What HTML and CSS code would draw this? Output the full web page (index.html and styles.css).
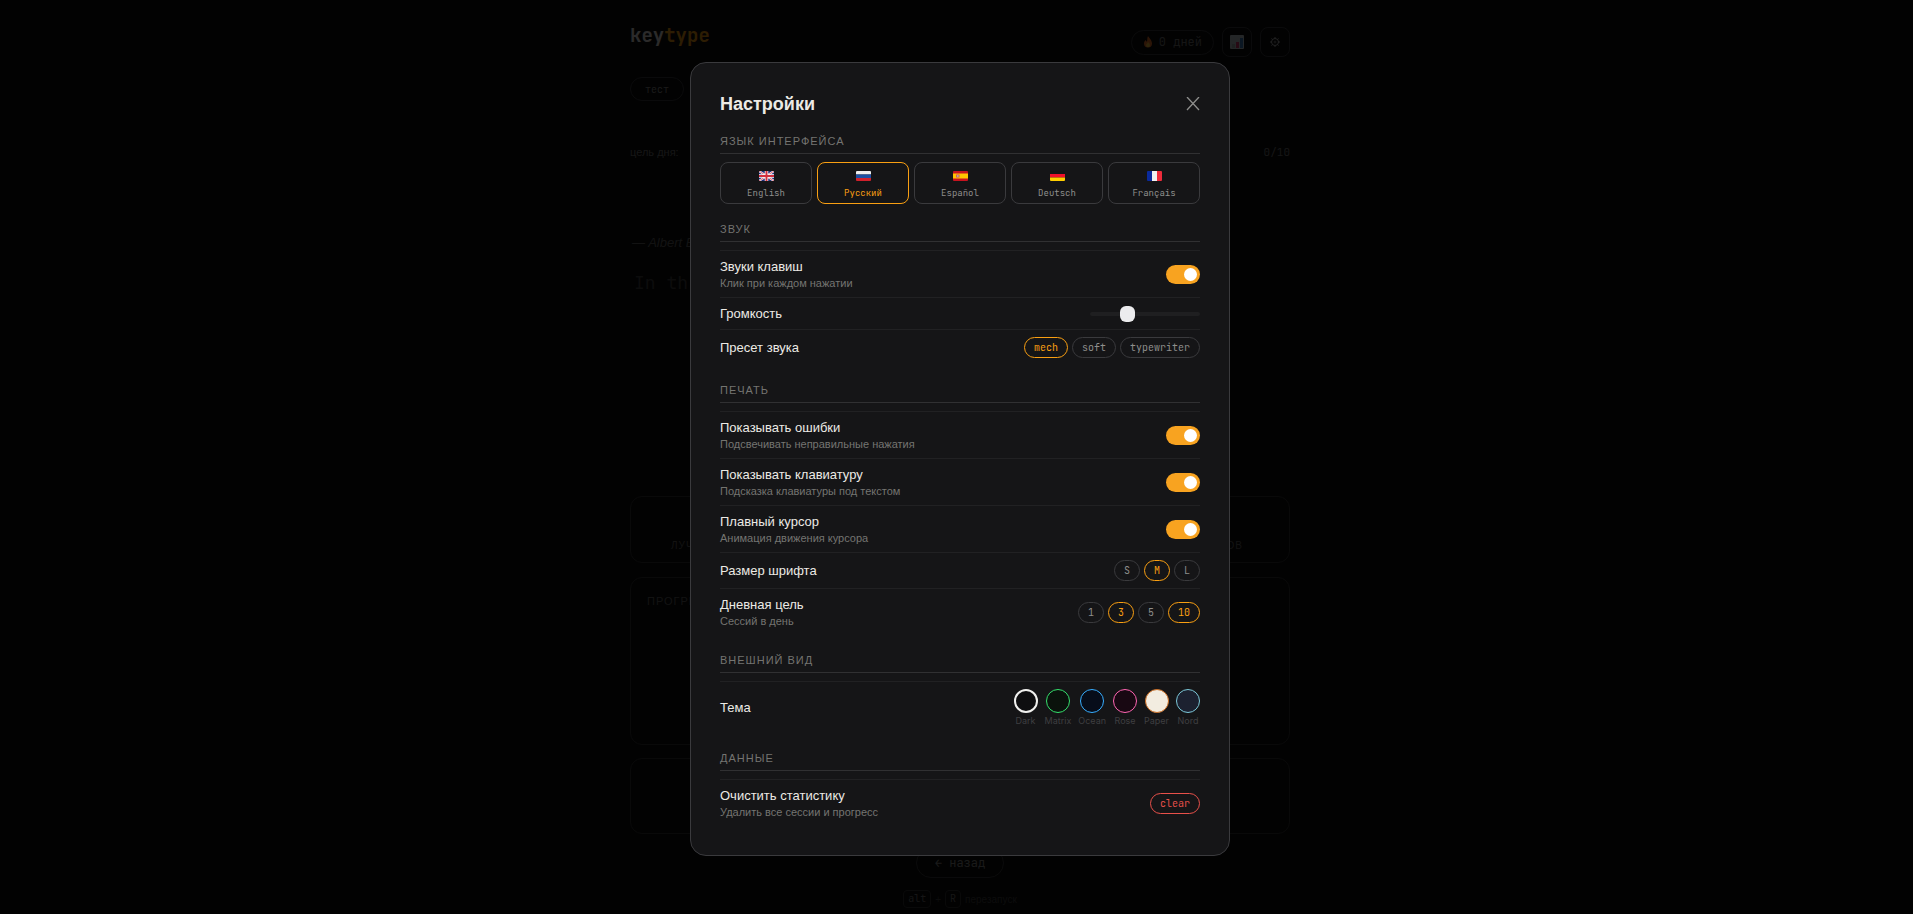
FILE: index.html
```
<!DOCTYPE html>
<html lang="ru">
<head>
  <meta charset="UTF-8">
  <meta name="viewport" content="width=device-width, initial-scale=1.0">
  <title>keytype</title>
  <link rel="stylesheet" href="styles.css">
</head>
<body>

  <div class="app">
    <header class="header">
      <div class="logo">key<span>type</span></div>
      <div class="header-right">
        <div class="streak">
          <svg width="10" height="12" viewBox="0 0 10 12"><path d="M5 0c1 2 4 4 4 7.500a4 4 0 0 1-8 0C1 5.500 2 4.500 3 4c0 1 .5 1.500 1 1.500C4.500 4 4 2 5 0z" fill="#f4762a"/><path d="M5 6c1 1 2 2 2 3.300a2 2 0 0 1-4 0C3 8 4.500 7.500 5 6z" fill="#ffc83d"/></svg>
          0 дней
        </div>
        <button class="icon-btn" aria-label="Статистика">
          <svg width="14" height="14" viewBox="0 0 14 14"><rect width="14" height="14" rx="1" fill="#c9d1d6"/><path d="M2 9h3v4H2z" fill="#a8b5b0"/><path d="M6 7h3v6H6z" fill="#d63b6f"/><path d="M10 3h3v10h-3z" fill="#3f7fc4"/></svg>
        </button>
        <button class="icon-btn" aria-label="Настройки">
          <svg width="12" height="12" viewBox="0 0 12 12" fill="none" stroke="#bbb"><circle cx="6" cy="6" r="3.500"/><circle cx="6" cy="6" r="1" stroke-width=".6"/><path d="M6 1v1.500M6 9.500V11M1 6h1.500M9.500 6H11M2.500 2.500l1 1M8.500 8.500l1 1M2.500 9.500l1-1M8.500 3.500l1-1"/></svg>
        </button>
      </div>
    </header>

    <nav class="modes">
      <button class="mode-btn">тест</button>
    </nav>

    <div class="goal">
      <span>цель дня:</span>
      <span class="goal-count">0/10</span>
    </div>

    <div class="author">— Albert E</div>
    <div class="text-display">In th</div>

    <div class="card stats">
      <span>лучший</span>
      <span>слов</span>
    </div>
    <div class="card progress">прогресс</div>
    <div class="card history"></div>

    <button class="back-btn">← назад</button>
    <div class="hint"><kbd>alt</kbd>+<kbd>R</kbd> перезапуск</div>
  </div>

  <div class="overlay">
    <div class="modal" role="dialog" aria-labelledby="modalTitle">
      <div class="modal-header">
        <h2 id="modalTitle">Настройки</h2>
        <button class="close-btn" aria-label="Закрыть">
          <svg width="14" height="14" viewBox="0 0 14 14"><path d="M1 0l12 13M13 0L1 13" stroke="currentColor" stroke-width="1.300"/></svg>
        </button>
      </div>

      <section class="section">
        <h3 class="section-title">Язык интерфейса</h3>
        <div class="lang-grid">
          <button class="lang-btn">
            <svg class="flag" viewBox="0 0 30 20"><path fill="#1f2f7a" d="M0 0h30v20H0z"/><path stroke="#fff" stroke-width="4" d="M0 0l30 20M30 0L0 20"/><path stroke="#d22f3f" stroke-width="1.500" d="M0 0l30 20M30 0L0 20"/><path stroke="#fff" stroke-width="7" d="M15 0v20M0 10h30"/><path stroke="#d22f3f" stroke-width="4" d="M15 0v20M0 10h30"/></svg>
            English
          </button>
          <button class="lang-btn active">
            <svg class="flag" viewBox="0 0 30 20"><path fill="#eee" d="M0 0h30v7H0z"/><path fill="#1c4fa3" d="M0 7h30v7H0z"/><path fill="#d0202c" d="M0 14h30v6H0z"/></svg>
            Русский
          </button>
          <button class="lang-btn">
            <svg class="flag" viewBox="0 0 30 20"><path fill="#c8131f" d="M0 0h30v20H0z"/><path fill="#ffc400" d="M0 5h30v10H0z"/><path fill="#d0605a" d="M6 7h7v6H6z"/><path fill="#b8a0a0" d="M8 8h3v4H8z"/></svg>
            Español
          </button>
          <button class="lang-btn">
            <svg class="flag" viewBox="0 0 30 20"><path fill="#141414" d="M0 0h30v6H0z"/><path fill="#f0102a" d="M0 6h30v7H0z"/><path fill="#ffce00" d="M0 13h30v7H0z"/></svg>
            Deutsch
          </button>
          <button class="lang-btn">
            <svg class="flag" viewBox="0 0 30 20"><path fill="#0a2a9c" d="M0 0h10v20H0z"/><path fill="#f0f0f0" d="M10 0h10v20H10z"/><path fill="#ee2b3b" d="M20 0h10v20H20z"/></svg>
            Français
          </button>
        </div>
      </section>

      <section class="section">
        <h3 class="section-title">Звук</h3>
        <div class="row">
          <label for="keySounds">Звуки клавиш<small>Клик при каждом нажатии</small></label>
          <input type="checkbox" class="toggle" id="keySounds" checked>
        </div>
        <div class="row">
          <label for="volume">Громкость</label>
          <input type="range" class="slider" id="volume" min="0" max="100" value="32">
        </div>
        <div class="row">
          <div class="label">Пресет звука</div>
          <div class="pills">
            <button class="pill active">mech</button>
            <button class="pill">soft</button>
            <button class="pill">typewriter</button>
          </div>
        </div>
      </section>

      <section class="section">
        <h3 class="section-title">Печать</h3>
        <div class="row">
          <label for="showErrors">Показывать ошибки<small>Подсвечивать неправильные нажатия</small></label>
          <input type="checkbox" class="toggle" id="showErrors" checked>
        </div>
        <div class="row">
          <label for="showKeyboard">Показывать клавиатуру<small>Подсказка клавиатуры под текстом</small></label>
          <input type="checkbox" class="toggle" id="showKeyboard" checked>
        </div>
        <div class="row">
          <label for="smoothCaret">Плавный курсор<small>Анимация движения курсора</small></label>
          <input type="checkbox" class="toggle" id="smoothCaret" checked>
        </div>
        <div class="row">
          <div class="label">Размер шрифта</div>
          <div class="pills">
            <button class="pill">S</button>
            <button class="pill active">M</button>
            <button class="pill">L</button>
          </div>
        </div>
        <div class="row">
          <div class="label">Дневная цель<small>Сессий в день</small></div>
          <div class="pills">
            <button class="pill">1</button>
            <button class="pill active">3</button>
            <button class="pill">5</button>
            <button class="pill active">10</button>
          </div>
        </div>
      </section>

      <section class="section">
        <h3 class="section-title">Внешний вид</h3>
        <div class="row">
          <div class="label">Тема</div>
          <div class="themes">
            <button class="theme dark active"><span class="swatch"></span>Dark</button>
            <button class="theme matrix"><span class="swatch"></span>Matrix</button>
            <button class="theme ocean"><span class="swatch"></span>Ocean</button>
            <button class="theme rose"><span class="swatch"></span>Rose</button>
            <button class="theme paper"><span class="swatch"></span>Paper</button>
            <button class="theme nord"><span class="swatch"></span>Nord</button>
          </div>
        </div>
      </section>

      <section class="section">
        <h3 class="section-title">Данные</h3>
        <div class="row">
          <div class="label">Очистить статистику<small>Удалить все сессии и прогресс</small></div>
          <button class="pill danger">clear</button>
        </div>
      </section>
    </div>
  </div>

</body>
</html>
```
FILE: styles.css
```
:root {
  --bg: #0c0c0d;
  --surface: #151517;
  --border: #3a3a3d;
  --line: #212123;
  --text: #eceae5;
  --muted: #747471;
  --accent: #f99f12;
  --danger: #e8504a;
  --sans: "Liberation Sans", Arial, sans-serif;
  --mono: "JetBrains Mono", "DejaVu Sans Mono", monospace;
}

* {
  box-sizing: border-box;
}

body {
  margin: 0;
  height: 100vh;
  overflow: hidden;
  background: var(--bg);
  color: var(--text);
  font-family: var(--sans);
}

button {
  margin: 0;
  background: none;
  border: 1px solid var(--border);
  color: #8e8e8c;
  font-family: var(--mono);
  cursor: pointer;
}

/* page */
.app {
  display: flex;
  flex-direction: column;
  max-width: 667px;
  margin: 0 auto;
  padding: 27px 0 0 7px;
}

.header {
  display: flex;
  justify-content: space-between;
  align-items: flex-start;
  height: 50px;
}

.logo {
  font-family: var(--mono);
  font-size: 19px;
  font-weight: bold;
  line-height: 18px;
}

.logo span {
  color: var(--accent);
}

.header-right {
  display: flex;
  align-items: center;
  gap: 8px;
}

.streak {
  display: flex;
  align-items: center;
  gap: 6px;
  height: 25px;
  padding: 0 11px;
  border: 1px solid var(--border);
  border-radius: 20px;
  color: #777;
  font-family: var(--mono);
  font-size: 12px;
}

.icon-btn {
  display: flex;
  align-items: center;
  justify-content: center;
  width: 30px;
  height: 30px;
  padding: 0;
  border-radius: 8px;
}

.mode-btn {
  height: 24px;
  padding: 0 14px;
  border-radius: 20px;
  font-size: 10px;
}

.goal {
  display: flex;
  justify-content: space-between;
  margin-top: 43px;
  color: #777;
  font-size: 11px;
  line-height: 16px;
}

.goal-count {
  font-family: var(--mono);
}

.author {
  margin-top: 75px;
  padding-left: 2px;
  color: #666;
  font-size: 13px;
  font-style: italic;
  line-height: 16px;
}

.text-display {
  margin-top: 20px;
  padding-left: 4px;
  color: #444;
  font-family: var(--mono);
  font-size: 18px;
  line-height: 24px;
}

.card {
  border: 1px solid #333;
  border-radius: 12px;
  color: #666;
  font-size: 11px;
  letter-spacing: 1px;
  text-transform: uppercase;
}

.stats {
  display: flex;
  justify-content: space-between;
  margin-top: 201px;
  height: 67px;
  padding: 43px 46px 0 40px;
  font-size: 10px;
}

.progress {
  margin-top: 14px;
  height: 168px;
  padding: 17px 16px;
}

.history {
  margin-top: 13px;
  height: 76px;
}

.back-btn {
  align-self: center;
  height: 30px;
  margin-top: 14px;
  padding: 0 18px;
  border-radius: 20px;
  font-size: 12px;
}

.hint {
  display: flex;
  align-items: center;
  justify-content: center;
  gap: 4px;
  margin-top: 12px;
  color: #444;
  font-size: 10px;
}

.hint kbd {
  padding: 1px 4px;
  border: 1px solid #333;
  border-radius: 4px;
  color: #777;
  font-family: var(--mono);
  line-height: 14px;
}

/* settings modal */
.overlay {
  position: fixed;
  inset: 0;
  display: flex;
  align-items: center;
  justify-content: center;
  padding: 4px 0 0 7px;
  background: rgba(0, 0, 0, 0.82);
}

.modal {
  width: 100%;
  max-width: 540px;
  padding: 29px;
  background: var(--surface);
  border: 1px solid var(--border);
  border-radius: 16px;
}

.modal-header {
  display: flex;
  align-items: center;
  justify-content: space-between;
  margin-bottom: 18px;
}

.modal-header h2 {
  margin: 0;
  font-size: 18px;
  line-height: 24px;
}

.close-btn {
  display: flex;
  padding: 0;
  border: none;
}

.section + .section {
  margin-top: 18px;
}

.section-title {
  margin: 0 0 8px;
  padding-bottom: 5px;
  border-bottom: 1px solid #303032;
  color: var(--muted);
  font-size: 11px;
  font-weight: normal;
  line-height: 14px;
  letter-spacing: 1px;
  text-transform: uppercase;
}

.lang-grid {
  display: grid;
  grid-template-columns: repeat(5, 1fr);
  gap: 5px;
}

.lang-btn {
  display: flex;
  flex-direction: column;
  align-items: center;
  gap: 6px;
  padding: 8px 0 4px;
  border-radius: 8px;
  font-size: 9px;
  line-height: 12px;
}

.flag {
  width: 15px;
  height: 10px;
  border-radius: 1px;
}

.row {
  display: flex;
  align-items: center;
  justify-content: space-between;
  padding: 7px 0;
  border-top: 1px solid var(--line);
}

.row label,
.row .label {
  font-size: 13px;
  line-height: 17px;
}

.row small {
  display: block;
  margin-top: 2px;
  color: var(--muted);
  font-size: 11px;
  line-height: 13px;
}

.toggle {
  appearance: none;
  display: flex;
  align-items: center;
  width: 34px;
  height: 19px;
  margin: 0;
  padding: 0 3px;
  border-radius: 10px;
  background: #333;
  cursor: pointer;
}

.toggle::before {
  content: "";
  width: 13px;
  height: 13px;
  border-radius: 50%;
  background: #fff;
}

.toggle:checked {
  justify-content: flex-end;
  background: #f8a320;
}

.slider {
  appearance: none;
  width: 110px;
  height: 4px;
  margin: 0;
  border-radius: 2px;
  background: #1f1f21;
}

.slider::-webkit-slider-thumb {
  appearance: none;
  width: 15px;
  height: 16px;
  border-radius: 6px;
  background: #ececee;
}

.pills {
  display: flex;
  gap: 4px;
}

.pill {
  height: 21px;
  padding: 0 9px;
  border-radius: 20px;
  font-size: 10px;
}

.lang-btn.active,
.pill.active {
  border-color: var(--accent);
  color: var(--accent);
}

.pill.danger {
  border-color: var(--danger);
  color: var(--danger);
}

.themes {
  display: flex;
  gap: 7px;
}

.theme {
  display: flex;
  flex-direction: column;
  align-items: center;
  gap: 2px;
  padding: 0;
  border: none;
  color: #3f3f41;
  font-family: Inter, sans-serif;
  font-size: 9px;
  line-height: 11px;
}

.swatch {
  width: 24px;
  height: 24px;
  border: 1px solid;
  border-radius: 50%;
}

.dark .swatch {
  background: #0e0e10;
  border-color: #555;
}

.matrix .swatch {
  background: #0a120c;
  border-color: #35e06c;
}

.ocean .swatch {
  background: #070d1a;
  border-color: #38aeff;
}

.rose .swatch {
  background: #180812;
  border-color: #ff66b2;
}

.paper .swatch {
  background: #f2ece0;
  border-color: #c86a20;
}

.nord .swatch {
  background: #1c2130;
  border-color: #7cc8d8;
}

.theme.active .swatch {
  border: 2px solid #f0f0ee;
}
```
